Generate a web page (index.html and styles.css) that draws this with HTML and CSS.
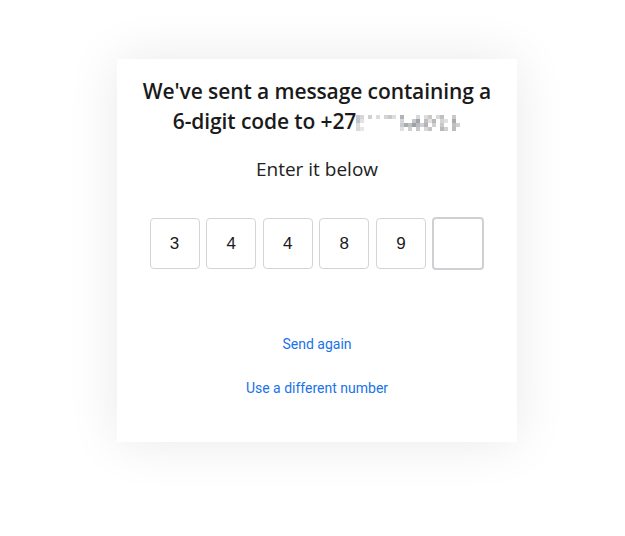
FILE: index.html
```html
<!DOCTYPE html>
<html>
<head>
<meta charset="utf-8">
<link rel="stylesheet" href="styles.css">
</head>
<body>
<div class="page">
  <div class="card">
    <h1 class="title">We've sent a message containing a<br>6-digit code to +27<svg class="blur" width="105" height="17" viewBox="0 0 105 17" xmlns="http://www.w3.org/2000/svg">
      <rect x="0" y="1" width="4" height="4" fill="#c8c8c8"/>
      <rect x="4" y="1" width="4" height="4" fill="#d6d6d6"/>
      <rect x="0" y="5" width="4" height="4" fill="#c0c4c8"/>
      <rect x="4" y="5" width="4" height="4" fill="#e2e2e2"/>
      <rect x="0" y="9" width="4" height="4" fill="#d8dde0"/>
      <rect x="0" y="13" width="4" height="4" fill="#dadada"/>
      <rect x="4" y="13" width="4" height="4" fill="#e6e6e6"/>
      <rect x="12" y="1" width="4" height="4" fill="#d0d0d0"/>
      <rect x="20" y="1" width="4" height="4" fill="#dcdcdc"/>
      <rect x="28" y="1" width="4" height="4" fill="#d4d4d4"/>
      <rect x="32" y="1" width="4" height="4" fill="#c8c8c8"/>
      <rect x="36" y="1" width="4" height="4" fill="#dedede"/>
      <rect x="44" y="1" width="4" height="4" fill="#b0b4b8"/>
      <rect x="44" y="5" width="4" height="4" fill="#d6d6d6"/>
      <rect x="44" y="9" width="4" height="4" fill="#c8ccd0"/>
      <rect x="48" y="9" width="4" height="4" fill="#a8acb0"/>
      <rect x="52" y="9" width="4" height="4" fill="#c0c0c0"/>
      <rect x="44" y="13" width="4" height="4" fill="#e0e0e0"/>
      <rect x="52" y="13" width="4" height="4" fill="#d0d0d0"/>
      <rect x="56" y="5" width="4" height="4" fill="#c4c8cc"/>
      <rect x="56" y="9" width="4" height="4" fill="#9ca0a8"/>
      <rect x="60" y="1" width="4" height="4" fill="#d8d8d8"/>
      <rect x="60" y="5" width="4" height="4" fill="#a0a4ac"/>
      <rect x="60" y="9" width="4" height="4" fill="#b8bcc0"/>
      <rect x="60" y="13" width="4" height="4" fill="#c8c8c8"/>
      <rect x="64" y="9" width="4" height="4" fill="#d0d0d0"/>
      <rect x="68" y="1" width="4" height="4" fill="#dcdcdc"/>
      <rect x="68" y="5" width="4" height="4" fill="#c0c0c0"/>
      <rect x="68" y="9" width="4" height="4" fill="#b4b4b8"/>
      <rect x="68" y="13" width="4" height="4" fill="#d8d8d8"/>
      <rect x="72" y="1" width="4" height="4" fill="#c8c8c8"/>
      <rect x="72" y="5" width="4" height="4" fill="#e0e0e0"/>
      <rect x="72" y="13" width="4" height="4" fill="#c4c4c4"/>
      <rect x="76" y="5" width="4" height="4" fill="#b8b8b8"/>
      <rect x="76" y="9" width="4" height="4" fill="#d0d0d0"/>
      <rect x="80" y="1" width="4" height="4" fill="#d8d8d8"/>
      <rect x="84" y="1" width="4" height="4" fill="#c0c0c0"/>
      <rect x="84" y="5" width="4" height="4" fill="#d4d4d4"/>
      <rect x="84" y="9" width="4" height="4" fill="#c8c8c8"/>
      <rect x="84" y="13" width="4" height="4" fill="#b8b8bc"/>
      <rect x="88" y="5" width="4" height="4" fill="#e0e0e0"/>
      <rect x="88" y="13" width="4" height="4" fill="#d0d0d0"/>
      <rect x="96" y="1" width="4" height="4" fill="#c8c8c8"/>
      <rect x="96" y="5" width="4" height="4" fill="#a8acb0"/>
      <rect x="96" y="9" width="4" height="4" fill="#c0c0c0"/>
      <rect x="100" y="9" width="4" height="4" fill="#d0d0d0"/>
      <rect x="96" y="13" width="4" height="4" fill="#bcbcbc"/>
    </svg></h1>
    <p class="subtitle">Enter it below</p>
    <div class="code">
      <div class="digit">3</div>
      <div class="digit">4</div>
      <div class="digit">4</div>
      <div class="digit">8</div>
      <div class="digit">9</div>
      <div class="digit focused"></div>
    </div>
    <a class="link link-first" href="#">Send again</a>
    <a class="link" href="#">Use a different number</a>
  </div>
</div>
</body>
</html>
```
FILE: styles.css
```css
html, body {
  margin: 0;
  padding: 0;
  background: #ffffff;
}
.page {
  display: flex;
  justify-content: center;
  padding: 59px 0 94px 9px;
}
.card {
  width: 400px;
  height: 383px;
  box-sizing: border-box;
  background: #ffffff;
  box-shadow: 0 0 50px rgba(0, 0, 0, 0.09);
  display: flex;
  flex-direction: column;
  align-items: center;
  padding-top: 17px;
}
.title {
  margin: 0;
  font-family: "Open Sans", "Noto Sans", sans-serif;
  font-weight: 600;
  font-size: 21px;
  line-height: 30px;
  color: #1a1a1a;
  text-align: center;
  letter-spacing: -0.1px;
}
.blur {
  display: inline-block;
  vertical-align: -2px;
}
.subtitle {
  margin: 19px 0 0;
  font-family: "Open Sans", "Noto Sans", sans-serif;
  font-size: 19px;
  line-height: 28px;
  color: #222222;
}
.code {
  display: flex;
  gap: 6.6px;
  margin-top: 35px;
}
.digit {
  width: 50px;
  height: 51px;
  box-sizing: border-box;
  border: 1px solid #d4d4d8;
  border-radius: 4px;
  display: flex;
  align-items: center;
  justify-content: center;
  font-family: "Liberation Sans", Arial, sans-serif;
  font-size: 17px;
  color: #1a1a1a;
}
.digit.focused {
  border: 2px solid #cfd0d4;
  width: 52px;
  height: 53px;
  margin-top: -1px;
  margin-bottom: -1px;
}
.link {
  font-family: Roboto, "Liberation Sans", sans-serif;
  font-size: 14px;
  line-height: 20px;
  color: #1a73e8;
  text-decoration: none;
  margin-top: 24px;
}
.link-first {
  margin-top: 65px;
}
```
